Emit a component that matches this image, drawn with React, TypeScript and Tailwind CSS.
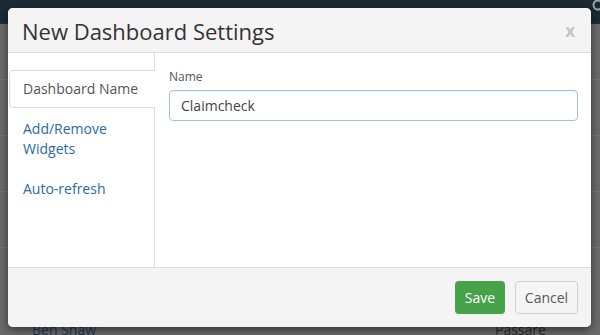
import React from 'react';

const tabs = [
  { id: 'name', label: 'Dashboard Name' },
  { id: 'widgets', label: 'Add/Remove Widgets' },
  { id: 'refresh', label: 'Auto-refresh' },
];

export default function App() {
  const active = 'name';

  return (
    <div className="relative w-[600px] h-[335px] overflow-hidden bg-[#6a6a6a]" style={{ fontFamily: '"Open Sans", "Noto Sans", sans-serif' }}>
      {/* Page behind the overlay */}
      <div className="flex flex-col h-full">
        <div className="h-[24px] bg-[#1b2a33] border-b-2 border-[#17313b] flex justify-end shrink-0">
          <svg width="12" height="14" viewBox="0 0 12 14" className="-mr-[4px] mt-[-1px]">
            <circle cx="6" cy="6" r="4.5" fill="none" stroke="#9aa4a8" strokeWidth="2" />
          </svg>
        </div>
        <div className="flex-1 flex flex-col">
          <div className="h-[56px] border-b border-[#777]"></div>
          <div className="h-[56px] border-b border-[#777]"></div>
          <div className="h-[56px] border-b border-[#777]"></div>
          <div className="h-[56px] border-b border-[#777]"></div>
          <div className="flex-1"></div>
          <div className="flex pl-[32px] text-[14px] leading-[18px] h-[14px] text-[#1e3550]">
            <span className="flex-1">Ben Shaw</span>
            <span className="w-[105px] text-[#2a2a2a]">Passare</span>
          </div>
        </div>
      </div>

      {/* Modal */}
      <div className="absolute left-[8px] top-[8px] w-[583px] h-[319px] bg-white rounded-[5px] shadow-[0_3px_9px_rgba(0,0,0,0.5)] flex flex-col overflow-hidden">
        <div className="h-[45px] bg-[#f4f4f4] border-b border-[#dcdcdc] flex items-center justify-between pl-[14px] pr-[16px] shrink-0">
          <h1 className="text-[22px] text-[#333] leading-none pt-[1px]">New Dashboard Settings</h1>
          <span className="text-[#c4c4c4] font-bold text-[17px] leading-none">x</span>
        </div>

        <div className="flex-1 flex min-h-0">
          <ul className="w-[147px] shrink-0 border-r border-[#ddd] pt-[17px] flex flex-col gap-[2px]">
            {tabs.map((t) =>
              t.id === active ? (
                <li
                  key={t.id}
                  className="relative -mr-px ml-px bg-white border border-r-0 border-[#ddd] rounded-l-[4px] px-[13px] py-[8px] text-[14px] leading-[20px] text-[#555]"
                >
                  {t.label}
                </li>
              ) : (
                <li key={t.id} className="pl-[15px] py-[9px] pr-[40px] text-[14px] leading-[20px] text-[#2a6aa5]">
                  {t.label}
                </li>
              )
            )}
          </ul>

          <div className="flex-1 pl-[14px] pr-[13px] pt-[16px]">
            <label className="block text-[12px] text-[#555] leading-[16px] mb-[5px]">Name</label>
            <div className="h-[31px] border border-[#9fc2e4] rounded-[4px] flex items-center px-[11px] text-[14px] text-[#444] shadow-[inset_0_1px_1px_rgba(0,0,0,0.05)]">
              Claimcheck
            </div>
          </div>
        </div>

        <div className="h-[60px] bg-[#f4f4f4] border-t border-[#dcdcdc] flex items-center justify-end gap-[10px] pr-[13px] shrink-0">
          <button className="h-[33px] w-[50px] rounded-[4px] bg-[#46a34a] text-white text-[14px]">Save</button>
          <button className="h-[33px] w-[63px] rounded-[4px] bg-[#f5f5f5] border border-[#cfcfcf] text-[#555] text-[14px]">Cancel</button>
        </div>
      </div>
    </div>
  );
}
